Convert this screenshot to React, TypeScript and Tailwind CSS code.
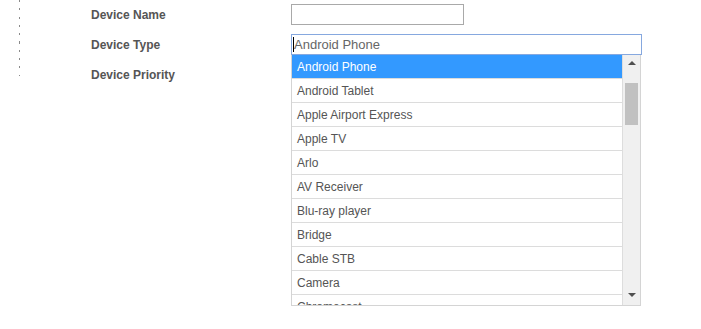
import React from 'react';

// 端末種別の候補（ドロップダウン表示分）
const DEVICE_TYPES = [
  'Android Phone',
  'Android Tablet',
  'Apple Airport Express',
  'Apple TV',
  'Arlo',
  'AV Receiver',
  'Blu-ray player',
  'Bridge',
  'Cable STB',
  'Camera',
  'Chromecast',
];

const FormRow: React.FC<{ label: string; children?: React.ReactNode }> = ({ label, children }) => (
  <div className="flex h-[30px]">
    <div className="w-[200px] flex items-center text-[12px] font-bold text-[#555]">{label}</div>
    <div className="pt-[4px]">{children}</div>
  </div>
);

export default function App() {
  return (
    <div
      className="relative w-[701px] h-[329px] bg-white overflow-hidden flex"
      style={{ fontFamily: '"Liberation Sans", Arial, sans-serif' }}
    >
      {/* 左側の点線 */}
      <div className="ml-[19px] w-px h-[76px] bg-[repeating-linear-gradient(to_bottom,#8a8a8a_0px,#8a8a8a_2px,transparent_2px,transparent_8.3px)]" />

      <div className="ml-[71px] flex flex-col">
        <FormRow label="Device Name">
          <div className="w-[173px] h-[21px] border border-[#a9a9a9] bg-white" />
        </FormRow>
        <FormRow label="Device Type">
          <div className="relative w-[351px] h-[21px] border border-[#86a8df] bg-white flex items-center pl-[2px] text-[13px] text-[#666]">
            <span className="absolute left-[1px] top-[2px] w-px h-[15px] bg-black" />
            Android Phone
          </div>
        </FormRow>
        <FormRow label="Device Priority" />
      </div>

      {/* ドロップダウンリスト */}
      <div className="absolute left-[291px] top-[55px] w-[350px] h-[251px] border-x border-b border-[#d4d4d4] bg-white flex">
        <div className="w-[331px] h-full overflow-hidden border-r border-[#ddd]">
          {DEVICE_TYPES.map((t, i) => (
            <div
              key={t}
              className={`h-[24px] pl-[5px] flex items-center text-[12px] border-b ${
                i === 0 ? 'bg-[#3399ff] text-white border-[#dcdcdc]' : 'text-[#555] border-[#dcdcdc]'
              }`}
            >
              {t}
            </div>
          ))}
        </div>
        <div className="relative w-[17px] h-full bg-[#f0f0f0]">
          <div className="absolute left-[5px] top-[6px] w-0 h-0 border-x-[4px] border-x-transparent border-b-[4px] border-b-[#505050]" />
          <div className="absolute left-[2px] top-[28px] w-[13px] h-[42px] bg-[#c1c1c1]" />
          <div className="absolute left-[5px] bottom-[8px] w-0 h-0 border-x-[4px] border-x-transparent border-t-[4px] border-t-[#505050]" />
        </div>
      </div>
    </div>
  );
}
